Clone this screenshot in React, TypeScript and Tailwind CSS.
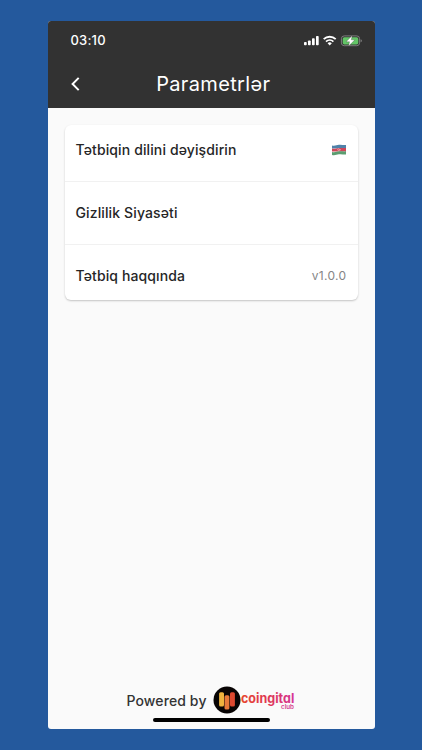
import React from 'react';

interface SettingsItem {
  id: string;
  label: string;
  value?: React.ReactNode;
}

const StatusIcons: React.FC = () => (
  <svg className="block" width="58" height="12" viewBox="0 0 58 12" fill="none">
    {/* signal */}
    <rect x="0" y="7" width="2.7" height="3.2" rx="0.8" fill="#fff" />
    <rect x="4" y="5.4" width="2.7" height="4.8" rx="0.8" fill="#fff" />
    <rect x="8" y="3.2" width="2.7" height="7" rx="0.8" fill="#fff" />
    <rect x="12" y="1" width="2.7" height="9.2" rx="0.8" fill="#fff" />
    {/* wifi */}
    <path d="M19.7 4.1a8.8 8.8 0 0 1 12 0" stroke="#fff" strokeWidth="1.9" />
    <path d="M22 6.6a5.4 5.4 0 0 1 7.4 0" stroke="#fff" strokeWidth="1.7" />
    <path d="M25.7 10.4l-2.1-2.2a3 3 0 0 1 4.2 0z" fill="#fff" />
    {/* battery */}
    <rect x="37.4" y="0.9" width="18.2" height="9.8" rx="2.8" stroke="#858585" strokeWidth="0.9" />
    <rect x="38.7" y="2.2" width="15.6" height="7.2" rx="1.7" fill="#62c466" />
    <path d="M56.6 4.3c.9.3 1.2.9 1.2 1.5s-.3 1.2-1.2 1.5z" fill="#858585" />
    <path
      d="M48.3 0.6L42 6.8h3.5L44.5 11.2l6.4-6.4h-3.6z"
      fill="#fff"
      stroke="#323232"
      strokeWidth="0.3"
      strokeLinejoin="round"
    />
  </svg>
);

const Flag: React.FC = () => (
  <svg className="block" width="15" height="12" viewBox="0 0 15 12">
    <path d="M0 1.5C3 2.3 4.5 1 7 .8S12 1.2 14 1v3.5H0z" fill="#4f82a9" />
    <path d="M0 4.6c3 .7 4.5-.4 7-.6s5 .3 7 0v3.6H0z" fill="#cf4558" />
    <path d="M0 7.9c3 .7 4.5-.4 7-.6s5 .3 7 0v3.2c-2 .2-4.5-.5-7-.2S3 11.7 0 11z" fill="#5b9d70" />
    <circle cx="6.7" cy="5.7" r="1" fill="none" stroke="#f0cdd4" strokeWidth="0.6" />
    <circle cx="8.2" cy="5.7" r="0.5" fill="#f0cdd4" />
  </svg>
);

const Logo: React.FC = () => (
  <svg className="block" width="82" height="28" viewBox="0 0 82 28">
    <defs>
      <linearGradient id="word" x1="0" x2="1">
        <stop offset="0" stopColor="#e64530" />
        <stop offset="0.5" stopColor="#df3752" />
        <stop offset="1" stopColor="#d53598" />
      </linearGradient>
    </defs>
    <circle cx="14" cy="14" r="13.5" fill="#080404" />
    <rect x="6.1" y="6.3" width="4.9" height="14.2" rx="1.5" fill="#eeb33e" />
    <rect x="11.5" y="9.3" width="4.9" height="14.2" rx="1.5" fill="#e7793a" />
    <rect x="17" y="6.3" width="4.9" height="14.2" rx="1.5" fill="#dd4930" />
    <text
      x="28"
      y="17"
      textLength="53.3"
      lengthAdjust="spacingAndGlyphs"
      fill="url(#word)"
      className="font-['Inter',sans-serif] text-[13px] font-bold [font-feature-settings:'cv11']"
    >
      coingital
    </text>
    <text
      x="68"
      y="23.2"
      textLength="13"
      lengthAdjust="spacingAndGlyphs"
      fill="#d53c91"
      className="font-['Inter',sans-serif] text-[6px] font-semibold"
    >
      club
    </text>
  </svg>
);

const items: SettingsItem[] = [
  { id: 'language', label: 'Tətbiqin dilini dəyişdirin', value: <Flag /> },
  { id: 'privacy', label: 'Gizlilik Siyasəti' },
  {
    id: 'about',
    label: 'Tətbiq haqqında',
    value: <span className="pt-px text-[12px] tracking-[0.35px] text-[#858585]">v1.0.0</span>,
  },
];

const App: React.FC = () => {
  return (
    <div className="h-[750px] w-[422px] bg-[#24599d] pt-[21px] pl-[47.5px] font-['Inter','Liberation_Sans',sans-serif]">
      <div className="flex h-[708px] w-[327.5px] flex-col overflow-hidden rounded-[3px] bg-[#fafafa]">
        <header className="h-[87px] shrink-0 bg-[#323232] text-white">
          <div className="flex h-10 items-center justify-between pr-[13px] pl-[23px]">
            <span className="text-[13px] font-medium tracking-[0.2px]">03:10</span>
            <StatusIcons />
          </div>
          <div className="grid h-[46px] grid-cols-[56px_1fr_56px] items-center">
            <button className="flex h-full items-center pl-[22px]" aria-label="Geri">
              <svg width="10" height="16" viewBox="0 0 10 16" fill="none">
                <path d="M8.7 1.9L2.6 8l6.1 6.1" stroke="#fff" strokeWidth="2" />
              </svg>
            </button>
            <h1 className="pl-1 text-center text-[20px] tracking-[0.35px]">Parametrlər</h1>
          </div>
        </header>

        <main className="flex-1 pt-[17px] pr-[17.5px] pl-[17px]">
          <ul className="h-[175px] rounded-[6px] bg-white shadow-[0_1px_2px_rgba(0,0,0,0.22)]">
            {items.map((item) => (
              <li
                key={item.id}
                className="flex h-[63px] items-center justify-between border-b border-[#f1f1f1] pr-[11px] pb-[2px] pl-[11px] first:h-[57px] first:pb-[7px] last:h-[55px] last:border-b-0 last:pt-[7px]"
              >
                <span className="text-[14px] font-medium tracking-[0.12px] text-[#262626]">{item.label}</span>
                {item.value}
              </li>
            ))}
          </ul>
        </main>

        <footer className="flex h-[43px] shrink-0 flex-col items-center">
          <div className="flex items-center gap-[6.5px] pr-[1px]">
            <span className="text-[14px] font-medium tracking-[0.12px] text-[#333]">Powered by</span>
            <Logo />
          </div>
          <div className="mt-[4px] h-[4px] w-[117px] rounded-full bg-black" />
        </footer>
      </div>
    </div>
  );
};

export default App;
